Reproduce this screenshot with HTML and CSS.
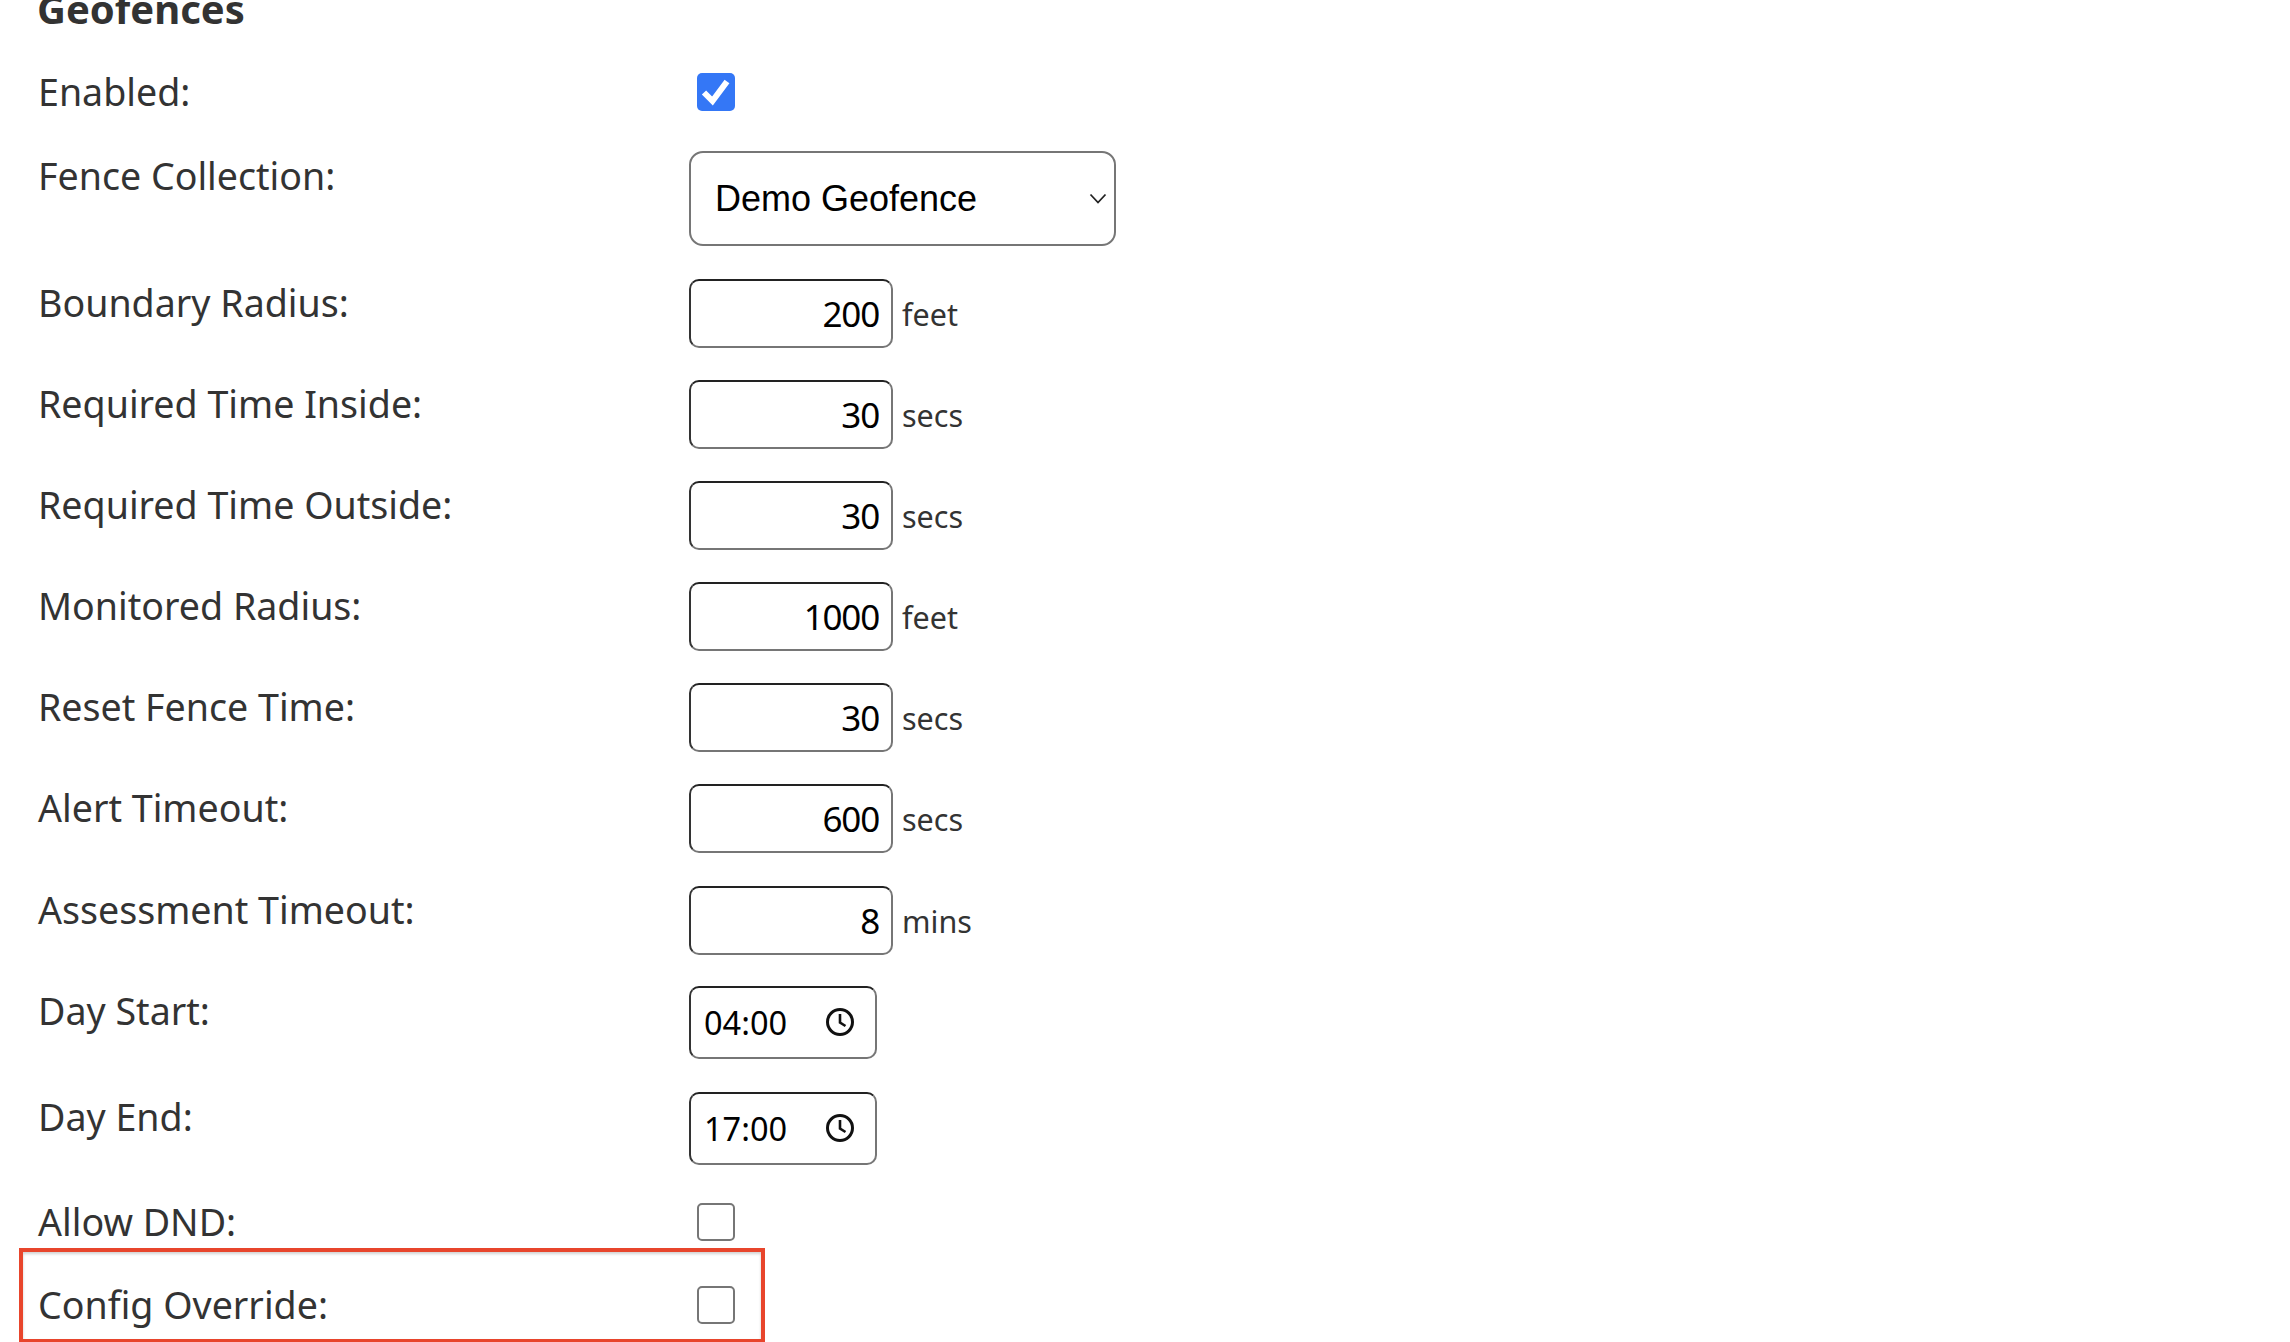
FILE: index.html
```html
<!DOCTYPE html>
<html lang="en">
<head>
  <meta charset="UTF-8">
  <title>Geofences</title>
  <link rel="stylesheet" href="styles.css">
</head>
<body>

  <h3 class="section-title">Geofences</h3>

  <div class="form">
    <div class="row row-enabled">
      <label class="row-label">Enabled:</label>
      <span class="check checked">
        <svg viewBox="0 0 38 38" width="38" height="38"><path d="M7 19.5l8.5 8.5L30 8.5" fill="none" stroke="#fff" stroke-width="6"/></svg>
      </span>
    </div>

    <div class="row row-select">
      <label class="row-label">Fence Collection:</label>
      <div class="select-box">
        <span>Demo Geofence</span>
        <svg class="select-arrow" viewBox="0 0 18 11" width="18" height="11"><path d="M1.5 1.5L9 9.5l7.5-8" fill="none" stroke="#222" stroke-width="1.8"/></svg>
      </div>
    </div>

    <div class="row row-number">
      <label class="row-label">Boundary Radius:</label>
      <input class="number-input" type="text" value="200">
      <span class="unit">feet</span>
    </div>
    <div class="row row-number">
      <label class="row-label">Required Time Inside:</label>
      <input class="number-input" type="text" value="30">
      <span class="unit">secs</span>
    </div>
    <div class="row row-number">
      <label class="row-label">Required Time Outside:</label>
      <input class="number-input" type="text" value="30">
      <span class="unit">secs</span>
    </div>
    <div class="row row-number">
      <label class="row-label">Monitored Radius:</label>
      <input class="number-input" type="text" value="1000">
      <span class="unit">feet</span>
    </div>
    <div class="row row-number">
      <label class="row-label">Reset Fence Time:</label>
      <input class="number-input" type="text" value="30">
      <span class="unit">secs</span>
    </div>
    <div class="row row-number">
      <label class="row-label">Alert Timeout:</label>
      <input class="number-input" type="text" value="600">
      <span class="unit">secs</span>
    </div>
    <div class="row row-number">
      <label class="row-label">Assessment Timeout:</label>
      <input class="number-input" type="text" value="8">
      <span class="unit">mins</span>
    </div>

    <div class="row row-time">
      <label class="row-label">Day Start:</label>
      <div class="time-box">
        <span class="time-value">04:00</span>
        <svg viewBox="0 0 30 30" width="30" height="30"><circle cx="15" cy="15" r="12.5" fill="none" stroke="#111" stroke-width="3"/><path d="M15 7v8.5l5.5 3.5" fill="none" stroke="#111" stroke-width="2.6"/></svg>
      </div>
    </div>
    <div class="row row-time">
      <label class="row-label">Day End:</label>
      <div class="time-box">
        <span class="time-value">17:00</span>
        <svg viewBox="0 0 30 30" width="30" height="30"><circle cx="15" cy="15" r="12.5" fill="none" stroke="#111" stroke-width="3"/><path d="M15 7v8.5l5.5 3.5" fill="none" stroke="#111" stroke-width="2.6"/></svg>
      </div>
    </div>

    <div class="row row-dnd">
      <label class="row-label">Allow DND:</label>
      <span class="check"></span>
    </div>

    <!-- Highlighted row -->
    <div class="row row-override">
      <label class="row-label">Config Override:</label>
      <span class="check"></span>
    </div>
  </div>

</body>
</html>
```

FILE: styles.css
```css
body {
  margin: 0;
  padding: 0;
  height: 1342px;
  overflow: hidden;
  background-color: #fff;
  font-family: "Noto Sans", sans-serif;
  color: #333;
}

.section-title {
  margin: -19px 0 0 37px;
  font-size: 40px;
  line-height: 56px;
  font-weight: 700;
}

.form {
  padding-left: 38px;
  padding-top: 36px;
}

.row {
  display: flex;
  align-items: flex-start;
}

.row-label {
  width: 651px;
  flex-shrink: 0;
  margin-top: -1px;
  font-size: 37.6px;
  line-height: 52px;
}

.row-enabled,
.row-dnd,
.row-override {
  height: 38px;
}

.row-enabled .row-label,
.row-dnd .row-label,
.row-override .row-label {
  margin-top: -7px;
}

.row-select {
  margin-top: 40px;
  height: 95px;
}

.row-number {
  margin-top: 32.1px;
  height: 69px;
}

.row-select + .row-number {
  margin-top: 33px;
}

.row-number .row-label {
  margin-top: -2px;
}

.row-time {
  margin-top: 31px;
  height: 73px;
}

.row-time + .row-time {
  margin-top: 33px;
}

.row-dnd {
  margin-top: 38.2px;
}

.row-override {
  margin-top: 45px;
  position: relative;
}

/* Red annotation drawn around the last row */
.row-override::before {
  content: "";
  position: absolute;
  left: -19px;
  top: -38px;
  width: 738px;
  height: 87px;
  border: 4px solid #e8452c;
  box-shadow: inset 0 2px 3px rgba(0, 0, 0, 0.18);
  pointer-events: none;
}

.check {
  display: block;
  box-sizing: border-box;
  flex-shrink: 0;
  width: 38px;
  height: 38px;
  margin-left: 8px;
  border: 2px solid #767676;
  border-radius: 5px;
  background-color: #fff;
}

.check.checked {
  border: none;
  background-color: #3477f6;
}

.check svg {
  display: block;
}

.select-box {
  box-sizing: border-box;
  display: flex;
  align-items: center;
  justify-content: space-between;
  width: 427px;
  height: 95px;
  padding: 0 7px 0 24px;
  border: 2px solid #767676;
  border-radius: 14px;
  font-family: "Liberation Sans", sans-serif;
  font-size: 36px;
  color: #000;
}

.number-input {
  box-sizing: border-box;
  width: 204px;
  height: 69px;
  padding: 0 12px 0 0;
  border: 2px solid #767676;
  border-top-color: #222;
  border-left-color: #333;
  border-radius: 10px;
  outline: none;
  background-color: #fff;
  font-family: "Noto Sans", sans-serif;
  font-size: 35px;
  letter-spacing: -1.2px;
  color: #000;
  text-align: right;
}

.unit {
  margin: 11px 0 0 9px;
  font-size: 30.5px;
  line-height: 48px;
}

.time-box {
  box-sizing: border-box;
  display: flex;
  align-items: center;
  justify-content: space-between;
  width: 188px;
  height: 73px;
  padding: 0 20px 0 13px;
  border: 2px solid #767676;
  border-top-color: #222;
  border-left-color: #333;
  border-radius: 10px;
}

.time-value {
  font-size: 32.5px;
  color: #000;
}
```
